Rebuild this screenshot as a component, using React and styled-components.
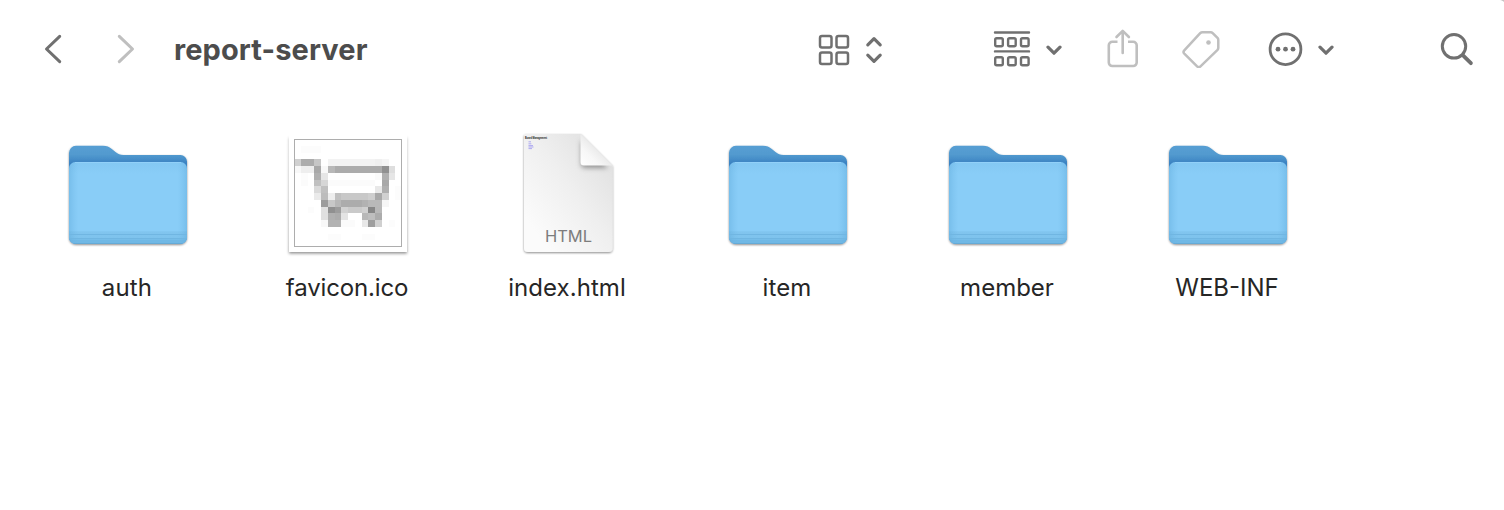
import styled, { createGlobalStyle } from "styled-components";

const GlobalStyle = createGlobalStyle`
  * {
    box-sizing: border-box;
  }
  body {
    margin: 0;
    background-color: #fff;
    font-family: Inter, "Liberation Sans", sans-serif;
    overflow: hidden;
  }
`;

const Window = styled.main`
  position: relative;
  width: 1504px;
  height: 510px;
  background-color: #fff;
  overflow: hidden;
`;

const WindowCorner = styled.svg`
  position: absolute;
  top: 0;
  right: 0;
`;

const Toolbar = styled.header`
  display: flex;
  align-items: center;
  height: 98px;
  padding: 0 29px 0 44px;
`;

const Tool = styled.button`
  display: flex;
  align-items: center;
  gap: ${({ $gap }) => $gap || 0}px;
  margin: 0 0 0 ${({ $before }) => $before || 0}px;
  padding: ${({ $drop }) => $drop || 0}px 0 0;
  border: none;
  background: none;
  color: ${({ $dimmed }) => ($dimmed ? "#bfbfbf" : "#707070")};
`;

const Icon = styled.svg`
  display: block;
  flex-shrink: 0;
  fill: none;
  stroke: currentColor;
  stroke-width: ${({ $weight }) => $weight || 3};
  stroke-linecap: round;
  stroke-linejoin: round;
`;

const Title = styled.h1`
  width: 200px;
  margin: 0 0 0 39px;
  padding-top: 1px;
  font-size: 29px;
  line-height: 37px;
  font-weight: 700;
  letter-spacing: 0.1px;
  white-space: nowrap;
  color: #4c4c4c;
`;

const Files = styled.section`
  display: grid;
  grid-template-columns: repeat(6, 220px);
  padding: 32px 0 0 18px;
`;

const File = styled.figure`
  display: flex;
  flex-direction: column;
  align-items: center;
  margin: 0;
`;

const Preview = styled.div`
  display: flex;
  justify-content: center;
  height: 136px;
`;

const Name = styled.figcaption`
  margin-top: 6px;
  padding-right: 2px;
  font-size: 24px;
  line-height: 32px;
  letter-spacing: ${({ $spacing }) => $spacing || 0}px;
  color: #262626;
`;

const Picture = styled.svg`
  display: block;
  overflow: visible;
`;

const DocType = styled.text`
  font-size: 16.5px;
  fill: #7d7d7d;
`;

const DocHeading = styled.text`
  font-family: "Liberation Sans", sans-serif;
  font-size: 3px;
  font-weight: 700;
  fill: #111;
`;

const Chevron = () => (
  <Icon width="17" height="12" viewBox="0 0 17 12" $weight={3.2}>
    <path d="M2 4.200 8 10.200 14 4.200" />
  </Icon>
);

const Folder = () => (
  <Picture width="124" height="124" viewBox="66 130 124 124">
    <defs>
      <linearGradient id="folderBack" x1="0" y1="0" x2="0" y2="1">
        <stop offset="0" stopColor="#569ed3" />
        <stop offset="0.09" stopColor="#529acf" />
        <stop offset="0.18" stopColor="#3a82c2" />
        <stop offset="1" stopColor="#3a82c2" />
      </linearGradient>
      <linearGradient id="folderFront" x1="0" y1="0" x2="0" y2="1">
        <stop offset="0" stopColor="#83c8f3" />
        <stop offset="0.15" stopColor="#89cdf7" />
        <stop offset="0.84" stopColor="#89cdf7" />
        <stop offset="0.85" stopColor="#81c5ef" />
        <stop offset="0.94" stopColor="#7dc2ec" />
        <stop offset="0.95" stopColor="#70b8e5" />
        <stop offset="1" stopColor="#70b8e5" />
      </linearGradient>
      <linearGradient id="folderSides">
        <stop offset="0" stopColor="#5ba7d8" stopOpacity="0.4" />
        <stop offset="0.08" stopColor="#6db6e5" stopOpacity="0" />
        <stop offset="0.92" stopColor="#6db6e5" stopOpacity="0" />
        <stop offset="1" stopColor="#5ba7d8" stopOpacity="0.4" />
      </linearGradient>
      <filter id="folderShadow" x="-10%" y="-10%" width="120%" height="120%">
        <feDropShadow dx="0" dy="1" stdDeviation="1.1" floodOpacity="0.45" />
      </filter>
    </defs>
    <path
      filter="url(#folderShadow)"
      fill="url(#folderBack)"
      d="M69 153a7 7 0 0 1 7-7.2h27c4 0 6 1 8.500 3l4 3.200c2.500 2 4.500 3 8 3h57a6.500 6.500 0 0 1 6.500 6.500V237a7 7 0 0 1-7 7H76a7 7 0 0 1-7-7z"
    />
    <rect x="69" y="162" width="118" height="82" rx="6.500" fill="url(#folderFront)" />
    <rect x="69" y="162" width="118" height="82" rx="6.500" fill="url(#folderSides)" />
    <path stroke="#70b6e2" strokeWidth="1" d="M69 234.500h118M69.500 238.500h117" />
    <path stroke="#65aad6" strokeWidth="1" d="M74 243.500h108" />
    <path stroke="#98d4fa" strokeWidth="0.700" d="M75 162.500h106" />
  </Picture>
);

// 16 x 16 favicon, each entry is [column, row, length, grey]
const cartPixels = [
  [1, 1, 3, "#fcfcfc"],
  [0, 3, 1, "#d0d0d0"], [1, 3, 2, "#acacac"], [3, 3, 1, "#c6c6c6"], [5, 3, 7, "#f3f3f3"], [12, 3, 1, "#f0f0f0"], [13, 3, 1, "#f5f5f5"],
  [0, 4, 1, "#f8f8f8"], [1, 4, 2, "#eee"], [3, 4, 1, "#a8a8a8"], [4, 4, 1, "#f8f8f8"], [5, 4, 1, "#b8b8b8"], [6, 4, 7, "#acacac"], [13, 4, 1, "#919191"], [14, 4, 1, "#dedede"],
  [1, 5, 1, "#fcfcfc"], [3, 5, 1, "#b0b0b0"], [4, 5, 1, "#e6e6e6"], [12, 5, 1, "#fbfbfb"], [13, 5, 1, "#b0b0b0"], [14, 5, 1, "#e6e6e6"],
  [1, 6, 1, "#fbfbfb"], [3, 6, 1, "#c0c0c0"], [4, 6, 1, "#d6d6d6"], [5, 6, 7, "#fbfbfb"], [13, 6, 1, "#a8a8a8"],
  [3, 7, 1, "#dadada"], [4, 7, 1, "#c0c0c0"], [12, 7, 1, "#e8e8e8"], [13, 7, 1, "#afafaf"], [15, 7, 1, "#fcfcfc"],
  [3, 8, 1, "#eaeaea"], [4, 8, 1, "#bcbcbc"], [5, 8, 1, "#eee"], [6, 8, 1, "#c0c0c0"], [7, 8, 4, "#c8c8c8"], [11, 8, 1, "#cecece"], [12, 8, 1, "#a8a8a8"], [13, 8, 1, "#d0d0d0"], [15, 8, 1, "#fcfcfc"],
  [4, 9, 1, "#9c9c9c"], [5, 9, 1, "#c8c8c8"], [6, 9, 1, "#b8b8b8"], [7, 9, 3, "#acacac"], [10, 9, 1, "#b2b2b2"], [11, 9, 2, "#b9b9b9"], [13, 9, 1, "#f6f6f6"],
  [2, 10, 1, "#fcfcfc"], [4, 10, 1, "#e0e0e0"], [5, 10, 1, "#909090"], [6, 10, 1, "#9c9c9c"], [7, 10, 1, "#d2d2d2"], [8, 10, 2, "#cacaca"], [10, 10, 1, "#d0d0d0"], [11, 10, 1, "#878787"], [12, 10, 1, "#b8b8b8"],
  [4, 11, 1, "#e0e0e0"], [5, 11, 1, "#b0b0b0"], [6, 11, 1, "#acacac"], [7, 11, 1, "#e4e4e4"], [10, 11, 1, "#b8b8b8"], [11, 11, 1, "#bebebe"], [12, 11, 1, "#acacac"],
  [4, 12, 1, "#f8f8f8"], [5, 12, 2, "#b2b2b2"], [7, 12, 2, "#fbfbfb"], [10, 12, 1, "#e8e8e8"], [11, 12, 1, "#9e9e9e"], [12, 12, 1, "#d0d0d0"], [14, 12, 1, "#fcfcfc"],
  [5, 14, 2, "#fcfcfc"], [10, 14, 2, "#fcfcfc"],
];

const Favicon = () => (
  <Picture width="124" height="124" viewBox="286 130 124 124">
    <defs>
      <linearGradient id="photoFade" x1="0" y1="0" x2="0" y2="1">
        <stop offset="0" stopColor="#000" stopOpacity="0.25" />
        <stop offset="1" stopColor="#000" stopOpacity="0.45" />
      </linearGradient>
      <filter id="photoShadow" x="-10%" y="-10%" width="120%" height="120%">
        <feGaussianBlur stdDeviation="1.700" />
      </filter>
    </defs>
    <rect x="289" y="138" width="118" height="115.500" fill="url(#photoFade)" filter="url(#photoShadow)" />
    <rect x="289" y="134" width="118" height="118" fill="#fff" />
    <g transform="translate(294 139) scale(6.750)" shapeRendering="crispEdges">
      {cartPixels.map(([x, y, length, grey]) => (
        <rect key={`${x}-${y}`} x={x} y={y} width={length} height="1" fill={grey} />
      ))}
    </g>
    <rect x="294.500" y="139.500" width="107" height="107" fill="none" stroke="#adadad" />
  </Picture>
);

const HtmlDocument = () => (
  <Picture width="124" height="124" viewBox="506 130 124 124">
    <defs>
      <linearGradient
        id="paper"
        gradientUnits="userSpaceOnUse"
        x1="530"
        y1="225"
        x2="620"
        y2="160"
      >
        <stop offset="0" stopColor="#fbfbfb" />
        <stop offset="0.5" stopColor="#efefef" />
        <stop offset="1" stopColor="#dfdfdf" />
      </linearGradient>
      <linearGradient id="paperFold" x1="0" y1="1" x2="0.6" y2="0.4">
        <stop offset="0" stopColor="#fff" />
        <stop offset="0.5" stopColor="#f7f7f7" />
        <stop offset="1" stopColor="#e6e6e6" />
      </linearGradient>
      <filter id="paperShadow" x="-10%" y="-10%" width="120%" height="120%">
        <feDropShadow dx="0" dy="1" stdDeviation="1.2" floodOpacity="0.45" />
      </filter>
      <filter id="foldShadow" x="-40%" y="-40%" width="180%" height="180%">
        <feGaussianBlur stdDeviation="2.800" />
      </filter>
      <clipPath id="paperShape">
        <path d="M524 136a2 2 0 0 1 2-2h55l31.500 31.500V248a4 4 0 0 1-4 4H528a4 4 0 0 1-4-4z" />
      </clipPath>
    </defs>
    <path
      filter="url(#paperShadow)"
      fill="url(#paper)"
      d="M524 136a2 2 0 0 1 2-2h55l31.500 31.500V248a4 4 0 0 1-4 4H528a4 4 0 0 1-4-4z"
    />
    <g clipPath="url(#paperShape)">
      <path
        filter="url(#foldShadow)"
        fill="#000"
        fillOpacity="0.36"
        d="M581 140v24a4 4 0 0 0 4 4h23z"
      />
    </g>
    <path fill="url(#paperFold)" d="M580.500 134v28a3.500 3.500 0 0 0 3.500 3.500h28.500z" />
    <DocHeading x="525" y="138.700" textLength="22" lengthAdjust="spacingAndGlyphs">
      Board Management
    </DocHeading>
    <path
      stroke="#8c86ee"
      strokeWidth="0.900"
      strokeOpacity="0.750"
      d="M528.500 141.800h2.500M528.500 143.800h2.800M528.500 145.600h4.500M528.500 147h5M528.500 148.600h3.500"
    />
    <DocType x="545" y="242" textLength="47">
      HTML
    </DocType>
  </Picture>
);

const files = [
  { name: "auth", icon: Folder, spacing: 0.15 },
  { name: "favicon.ico", icon: Favicon, spacing: -0.15 },
  { name: "index.html", icon: HtmlDocument, spacing: 0.05 },
  { name: "item", icon: Folder, spacing: 0.1 },
  { name: "member", icon: Folder, spacing: 0 },
  { name: "WEB-INF", icon: Folder, spacing: 0 },
];

const App = () => {
  return (
    <Window>
      <GlobalStyle />
      <Toolbar>
        <Tool aria-label="Back">
          <Icon width="19" height="30" viewBox="0 0 19 30">
            <path d="M15.700 2.300 2.500 15 15.700 27.700" />
          </Icon>
        </Tool>
        <Tool aria-label="Forward" $dimmed $before={53}>
          <Icon width="19" height="30" viewBox="0 0 19 30">
            <path d="M3.300 2.300 16.500 15 3.300 27.700" />
          </Icon>
        </Tool>
        <Title>report-server</Title>
        <Tool aria-label="View as icons" $before={444} $gap={15} $drop={2}>
          <Icon width="32" height="32" viewBox="0 0 32 32" $weight={2.5}>
            <rect x="2" y="2" width="11.500" height="11.500" rx="2" />
            <rect x="18.500" y="2" width="11.500" height="11.500" rx="2" />
            <rect x="2" y="18.500" width="11.500" height="11.500" rx="2" />
            <rect x="18.500" y="18.500" width="11.500" height="11.500" rx="2" />
          </Icon>
          <Icon width="18" height="28" viewBox="0 0 18 28" $weight={3.2}>
            <path d="M2.800 8.800 9 2.600 15.200 8.800M2.800 19.200 9 25.400 15.200 19.200" />
          </Icon>
        </Tool>
        <Tool aria-label="Group by" $before={110} $gap={15}>
          <Icon width="38" height="36" viewBox="0 0 38 36" $weight={2.4}>
            <path d="M2 1.500h34M2 20.400h34" />
            <rect x="2.200" y="7.200" width="7.600" height="8" rx="1.500" />
            <rect x="15.100" y="7.200" width="7.600" height="8" rx="1.500" />
            <rect x="28" y="7.200" width="7.600" height="8" rx="1.500" />
            <rect x="2.200" y="26.200" width="7.600" height="8" rx="1.500" />
            <rect x="15.100" y="26.200" width="7.600" height="8" rx="1.500" />
            <rect x="28" y="26.200" width="7.600" height="8" rx="1.500" />
          </Icon>
          <Chevron />
        </Tool>
        <Tool aria-label="Share" $dimmed $before={44}>
          <Icon width="32" height="40" viewBox="0 0 32 40" $weight={2.6}>
            <path
              strokeLinecap="butt"
              d="M10.500 12.800H5.300a3.500 3.500 0 0 0-3.500 3.500V33.500a3.500 3.500 0 0 0 3.500 3.500h20.900a3.500 3.500 0 0 0 3.500-3.500V16.300a3.500 3.500 0 0 0-3.500-3.500h-5.200"
            />
            <path d="M15.700 24V2.500M9.500 8 15.700 1.900l6.200 6.100" />
          </Icon>
        </Tool>
        <Tool aria-label="Tags" $dimmed $before={43}>
          <Icon width="38" height="38" viewBox="0 0 38 38" $weight={2.5}>
            <path d="M20.500 2.300h8.200a3 3 0 0 1 2 .8l4.800 4.800a3 3 0 0 1 .8 2v8a3.500 3.500 0 0 1-1 2.300L18.500 36.300a2.500 2.500 0 0 1-3.400 0L2.300 23.700a2.500 2.500 0 0 1 0-3.400L18.200 3.200a3.200 3.200 0 0 1 2.300-.9z" />
            <circle cx="26.500" cy="12.500" r="2.300" fill="currentColor" stroke="none" />
          </Icon>
        </Tool>
        <Tool aria-label="More" $before={48} $gap={15}>
          <Icon width="35" height="36" viewBox="0 0 35 36" $weight={2.8}>
            <circle cx="17.500" cy="18.200" r="15.400" />
            <g fill="currentColor" stroke="none">
              <circle cx="10" cy="18.200" r="2.400" />
              <circle cx="17.500" cy="18.200" r="2.400" />
              <circle cx="25" cy="18.200" r="2.400" />
            </g>
          </Icon>
          <Chevron />
        </Tool>
        <Tool aria-label="Search" $before={105} $drop={1}>
          <Icon width="34" height="34" viewBox="0 0 34 34" $weight={3}>
            <circle cx="14" cy="13.300" r="11.700" />
            <path strokeWidth="3.800" d="m23.500 22.800 7.400 7.400" />
          </Icon>
        </Tool>
      </Toolbar>
      <Files>
        {files.map(({ name, icon: FileIcon, spacing }) => (
          <File key={name}>
            <Preview>
              <FileIcon />
            </Preview>
            <Name $spacing={spacing}>{name}</Name>
          </File>
        ))}
      </Files>
      <WindowCorner width="4" height="3" viewBox="0 0 4 3">
        <path fill="#c4c4c4" d="M0 0h4v2C3 .9 1.500.4 0 0z" />
      </WindowCorner>
    </Window>
  );
};

export default App;
